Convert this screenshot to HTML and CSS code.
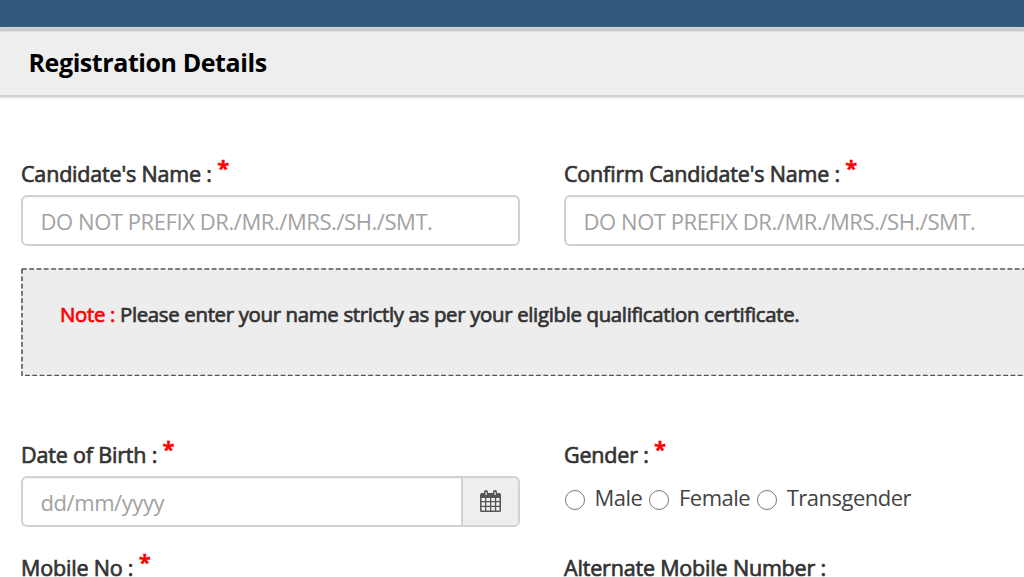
FILE: index.html
```html
<!DOCTYPE html>
<html lang="en">
<head>
<meta charset="utf-8">
<title>Registration Details</title>
<link rel="stylesheet" href="styles.css">
</head>
<body>
<div class="topbar"></div>
<header class="section-head"><h1 class="section-title">Registration Details</h1></header>
<form class="form">
  <div class="row">
    <div class="field">
      <label class="label" for="name">Candidate's Name : <span class="req">*</span></label>
      <input class="input" id="name" type="text" placeholder="DO NOT PREFIX DR./MR./MRS./SH./SMT.">
    </div>
    <div class="field">
      <label class="label" for="confirm">Confirm Candidate's Name : <span class="req">*</span></label>
      <input class="input" id="confirm" type="text" placeholder="DO NOT PREFIX DR./MR./MRS./SH./SMT.">
    </div>
  </div>
  <div class="note">
    <svg class="note-border" aria-hidden="true"><rect x="1" y="1" width="1042" height="106.5"/></svg>
    <p class="note-text"><span class="note-tag">Note :</span> <span class="note-body">Please enter your name strictly as per your eligible qualification certificate.</span></p>
  </div>
  <div class="row row-birth">
    <div class="field">
      <label class="label" for="dob">Date of Birth : <span class="req">*</span></label>
      <div class="input-group">
        <input class="input input-date" id="dob" type="text" placeholder="dd/mm/yyyy">
        <span class="addon">
          <svg class="calendar" viewBox="0 0 21 23">
            <path fill="#555" fill-rule="evenodd" d="M2 3H4V2Q4 0 6 0T8 2V3H13V2Q13 0 15 0T17 2V3H19Q21 3 21 5V20.500Q21 22 19.500 22H1.500Q0 22 0 20.500V5Q0 3 2 3ZM5.500 2V5H6.700V2ZM14.500 2V5H15.700V2ZM1.500 8V11H5V8ZM6.300 8V11H10V8ZM11.300 8V11H14.900V8ZM16.200 8V11H19.500V8ZM1.500 12.300V15.700H5V12.300ZM6.300 12.300V15.700H10V12.300ZM11.300 12.300V15.700H14.900V12.300ZM16.200 12.300V15.700H19.500V12.300ZM1.500 17V20.500H5V17ZM6.300 17V20.500H10V17ZM11.300 17V20.500H14.900V17ZM16.200 17V20.500H19.500V17Z"/>
          </svg>
        </span>
      </div>
    </div>
    <div class="field">
      <span class="label">Gender : <span class="req">*</span></span>
      <div class="radios">
        <label class="radio"><input class="radio-input" type="radio" name="gender">Male</label>
        <label class="radio"><input class="radio-input" type="radio" name="gender">Female</label>
        <label class="radio"><input class="radio-input" type="radio" name="gender">Transgender</label>
      </div>
    </div>
  </div>
  <div class="row row-mobile">
    <div class="field"><span class="label">Mobile No : <span class="req">*</span></span></div>
    <div class="field"><span class="label">Alternate Mobile Number :</span></div>
  </div>
</form>
</body>
</html>
```
FILE: styles.css
```css
* { box-sizing: border-box; }
html, body { height: 577px; overflow: hidden; }
body {
  margin: 0;
  background: #fff;
  color: #333;
  font-family: "Open Sans", "Noto Sans", sans-serif;
  font-size: 22px;
  letter-spacing: -0.43px;
}
.topbar { height: 27px; background: #31587d; }
.section-head {
  height: 70px;
  padding: 4px 28.5px 0;
  background: linear-gradient(#d2d2d2 2px, #c2c5c5 3px, #d2d2d2 4px, #eee 5px);
  border-bottom: 2px solid #d0d0d0;
  box-shadow: 0 1px 2px #ddd;
}
.section-title {
  margin: 0;
  color: #000;
  font-size: 25px;
  font-weight: 700;
  line-height: 62px;
  letter-spacing: -0.42px;
  white-space: nowrap;
}
.form { width: 1065px; padding: 63px 0 0 21px; }
.row { display: grid; grid-template-columns: 498.5px 498.5px; column-gap: 44.5px; }
.label {
  display: block;
  height: 35px;
  font-size: 21.5px;
  line-height: 28px;
  letter-spacing: -0.18px;
  white-space: nowrap;
  -webkit-text-stroke: 0.7px currentColor;
}
.req {
  position: relative;
  top: -6px;
  color: red;
  font-size: 22px;
  font-weight: 700;
  line-height: 0;
  -webkit-text-stroke: 0.3px currentColor;
}
.input {
  display: block;
  width: 100%;
  height: 51px;
  padding: 0 17.5px;
  border: 2px solid #d2d2d2;
  border-radius: 6px;
  background: #fff;
  box-shadow: inset 0 1px 1px rgba(0, 0, 0, .05);
  color: #555;
  font: inherit;
  letter-spacing: inherit;
}
.input::placeholder { color: #a2a2a2; opacity: 1; }
.note {
  position: relative;
  width: 1044px;
  height: 108px;
  margin-top: 22px;
  padding: 32px 39px;
  background: #ededed;
}
.note-border { position: absolute; inset: 0; width: 100%; height: 100%; }
.note-border rect { fill: none; stroke: #555; stroke-width: 1.6; stroke-dasharray: 4.7 2.6; }
.note-text {
  margin: 0;
  font-size: 20.4px;
  line-height: 28px;
  letter-spacing: -0.33px;
  white-space: nowrap;
  -webkit-text-stroke: 0.7px currentColor;
}
.note-tag { color: red; }
.row-birth { margin-top: 65px; }
.input-group { display: flex; }
.input-date { flex: 1; border-right: 0; border-radius: 6px 0 0 6px; }
.addon {
  display: flex;
  align-items: center;
  justify-content: center;
  width: 59px;
  height: 51px;
  border: 2px solid #d2d2d2;
  border-radius: 0 6px 6px 0;
  background: #eee;
}
.calendar { width: 21px; height: 23px; }
.radios { display: flex; gap: 6px; height: 51px; padding-top: 7px; }
.radio { display: flex; align-items: flex-start; color: #444; line-height: 28px; letter-spacing: -0.5px; white-space: nowrap; }
.radio-input {
  appearance: none;
  width: 20px;
  height: 20px;
  margin: 7px 10px 0 0.5px;
  border: 1.5px solid #777;
  border-radius: 50%;
  background: #fff;
}
.row-mobile { margin-top: 27px; }
```
